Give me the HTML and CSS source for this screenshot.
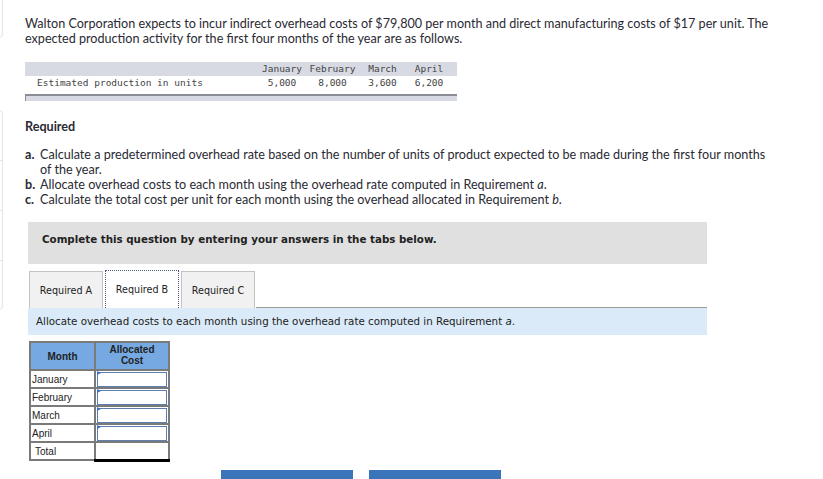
FILE: index.html
```html
<!DOCTYPE html>
<html>
<head>
<meta charset="utf-8">
<link rel="stylesheet" href="styles.css">
</head>
<body>
<div class="edge">
  <div class="edge-box top"></div>
  <div class="edge-box mid">
    <div class="edge-cell"></div>
    <div class="edge-cell"></div>
    <div class="edge-cell"></div>
    <div class="edge-cell last"></div>
  </div>
</div>
<main class="page">
  <p class="intro">Walton Corporation expects to incur indirect overhead costs of $79,800 per month and direct manufacturing costs of $17 per unit. The expected production activity for the first four months of the year are as follows.</p>

  <div class="data">
    <div class="data-row head">
      <span class="lbl"></span>
      <span class="c1">January</span><span class="c2">February</span><span class="c3">March</span><span class="c4">April</span>
    </div>
    <div class="data-row">
      <span class="lbl">Estimated production in units</span>
      <span class="c1">5,000</span><span class="c2">8,000</span><span class="c3">3,600</span><span class="c4">6,200</span>
    </div>
    <div class="data-foot"></div>
  </div>

  <h3 class="req-title">Required</h3>
  <ol class="req-list">
    <li><b>a.</b><span>Calculate a predetermined overhead rate based on the number of units of product expected to be made during the first four months of the year.</span></li>
    <li><b>b.</b><span>Allocate overhead costs to each month using the overhead rate computed in Requirement <i>a</i>.</span></li>
    <li><b>c.</b><span>Calculate the total cost per unit for each month using the overhead allocated in Requirement <i>b</i>.</span></li>
  </ol>

  <div class="panel">
    <div class="notice">Complete this question by entering your answers in the tabs below.</div>
    <div class="tabs">
      <div class="tab">Required A</div>
      <div class="tab active">Required B</div>
      <div class="tab">Required C</div>
      <div class="tab-rest"></div>
    </div>
    <div class="instr">Allocate overhead costs to each month using the overhead rate computed in Requirement <i>a</i>.</div>

    <table class="ans">
      <tr><th class="h1">Month</th><th class="h2">Allocated<br>Cost</th></tr>
      <tr><td class="m">January</td><td class="in"><div class="box"></div></td></tr>
      <tr><td class="m">February</td><td class="in"><div class="box"></div></td></tr>
      <tr><td class="m">March</td><td class="in"><div class="box"></div></td></tr>
      <tr><td class="m">April</td><td class="in"><div class="box"></div></td></tr>
      <tr><td class="m total">Total</td><td class="tot"></td></tr>
    </table>

    <div class="buttons">
      <div class="btn"></div>
      <div class="btn"></div>
    </div>
  </div>
</main>
</body>
</html>
```

FILE: styles.css
```css
html, body {
  margin: 0;
  padding: 0;
  background: #fff;
  overflow: hidden;
}
body {
  width: 823px;
  height: 479px;
  position: relative;
  font-family: Lato, "Open Sans", sans-serif;
  color: #2a2a33;
}
.edge {
  position: absolute;
  left: -6px;
  top: 0;
  width: 9px;
}
.edge-box {
  border: 1px solid #e4e4e4;
  border-radius: 4px;
  background: #fff;
}
.edge-box.top { height: 40px; margin-top: -4px; }
.edge-box.mid { margin-top: 72px; }
.edge-cell { height: 49px; border-bottom: 1px solid #e4e4e4; }
.edge-cell.last { border-bottom: none; height: 48px; }

.page {
  padding: 16px 0 0 25px;
}
.intro {
  margin: 0;
  width: 770px;
  font-size: 12.6px;
  line-height: 15px;
}
.data {
  margin-top: 16px;
  width: 432px;
  font-family: "DejaVu Sans Mono", monospace;
  font-size: 9.5px;
  color: #444;
}
.data-row {
  display: flex;
  height: 13px;
  line-height: 13px;
}
.data-row.head { background: #d7dae3; height: 14px; line-height: 14px; }
.data-row span { text-align: center; flex: none; }
.lbl { width: 221px; padding-left: 12px; text-align: left !important; }
.c1 { width: 48px; }
.c2 { width: 53px; }
.c3 { width: 47px; }
.c4 { width: 46px; }
.data-foot {
  margin-top: 5px;
  height: 5px;
  background: #d7dae3;
  border-top: 2px solid #8a8d96;
  border-left: 1px solid #8a8d96;
}
.req-title {
  margin: 18px 0 0;
  font-size: 12.6px;
  font-weight: 700;
  line-height: 15px;
}
.req-list {
  list-style: none;
  margin: 13px 0 0;
  padding: 0;
  width: 750px;
  font-size: 12.6px;
  line-height: 15px;
}
.req-list li { display: flex; }
.req-list li b { width: 15px; flex: none; }
.req-list li span { flex: 1; }

.panel { margin-left: 3px; width: 679px; }
.notice {
  margin-top: 15px;
  height: 42px;
  background: #e0e0e0;
  font-family: Verdana, "DejaVu Sans", sans-serif;
  font-weight: 700;
  font-size: 10.3px;
  color: #222;
  line-height: 34px;
  padding-left: 14px;
  box-sizing: border-box;
}
.tabs {
  margin-top: 6px;
  display: flex;
  align-items: flex-end;
  height: 38px;
}
.tab {
  width: 74px;
  height: 37px;
  box-sizing: border-box;
  border: 1px solid #c3c3c3;
  border-bottom: none;
  background: #f1f1f1;
  font-family: Verdana, "DejaVu Sans", sans-serif;
  font-size: 9.6px;
  color: #222;
  text-align: center;
  line-height: 38px;
  margin-left: 1px;
  margin-right: 1px;
}
.tab.active {
  background: #fff;
  border: 1px dotted #4a5a7a;
  border-bottom: none;
  height: 38px;
}
.tab-rest {
  flex: 1;
  height: 1px;
  background: #999;
}
.instr {
  height: 27px;
  background: #dbeaf8;
  font-family: Verdana, "DejaVu Sans", sans-serif;
  font-size: 10.3px;
  line-height: 27px;
  padding-left: 8px;
  color: #222;
}

.ans {
  margin-top: 6px;
  margin-left: 1px;
  border-collapse: collapse;
  font-family: "Liberation Sans", Arial, sans-serif;
  font-size: 10px;
  color: #222;
}
.ans th {
  background: #76a9e2;
  border: 2px solid #7a7a7a;
  font-weight: 700;
  height: 28px;
  box-sizing: border-box;
  line-height: 11px;
  padding: 0;
}
.ans th.h1 { width: 65px; }
.ans th.h2 { width: 74px; vertical-align: top; padding-top: 1px; }
.ans td {
  border: 2px solid #7a7a7a;
  height: 18px;
  padding: 0;
  box-sizing: border-box;
}
.ans td.m { padding-left: 1px; text-align: left; }
.ans td.total { padding-left: 4px; }
.ans td.in { padding: 0 1px; position: relative; }
.box {
  height: 15px;
  box-sizing: border-box;
  border: 1px solid #5d7fb0;
  background: #fff;
}
.ans td.in::before {
  content: "";
  position: absolute;
  left: 1px;
  top: 0;
  border-left: 4px solid #3a70c8;
  border-top: 2px solid transparent;
  border-bottom: 2px solid transparent;
}
.ans td.tot { border-bottom: 3px solid #000; border-top: 2px solid #000; }

.buttons {
  margin-top: 8px;
  margin-left: 193px;
  display: flex;
  gap: 16px;
}
.btn {
  width: 132px;
  height: 10px;
  background: #3a75b9;
}
```
